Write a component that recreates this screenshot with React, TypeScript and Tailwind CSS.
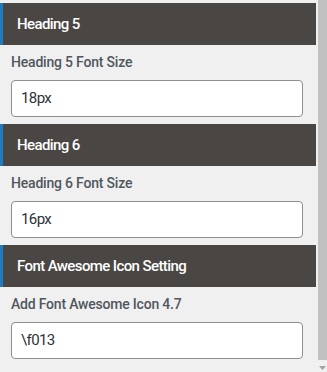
import React from "react";

const sections = [
  { title: "Heading 5", label: "Heading 5 Font Size", value: "18px" },
  { title: "Heading 6", label: "Heading 6 Font Size", value: "16px" },
  { title: "Font Awesome Icon Setting", label: "Add Font Awesome Icon 4.7", value: "\\f013" },
];

export default function App() {
  return (
    <div
      className="flex w-[327px] h-[372px] bg-[#f0f0f0] overflow-hidden"
      style={{ fontFamily: "Roboto, 'Liberation Sans', sans-serif" }}
    >
      <div className="w-[316px] pt-[3px] flex flex-col">
        {sections.map((s) => (
          <div key={s.title} className="flex flex-col mb-[7px]">
            <div className="h-[42px] bg-[#4a4644] border-l-[3px] border-[#1f7cc0] flex items-center pl-[14px] text-white text-[15px] font-medium tracking-[-0.6px]">
              {s.title}
            </div>
            <div className="h-[35px] flex items-center pl-[11px] text-[14px] font-medium tracking-[-0.2px] text-[#50575e]">
              {s.label}
            </div>
            <div className="ml-[11px] w-[292px] h-[37px] bg-white border border-[#8c8f94] rounded-[4px] flex items-center pl-[9px] text-[15px] tracking-[-0.6px] text-[#2c3338]">
              {s.value}
            </div>
          </div>
        ))}
      </div>
      <div className="w-[11px] flex flex-col">
        <div className="flex-1 ml-[2px] w-[9px] bg-[#c1c1c1] mb-[6px]" />
        <div className="h-[6px] flex justify-center pl-[2px]">
          <svg width="7" height="4" viewBox="0 0 7 4">
            <polygon points="0,0 7,0 3.5,4" fill="#a3a3a3" />
          </svg>
        </div>
      </div>
    </div>
  );
}
